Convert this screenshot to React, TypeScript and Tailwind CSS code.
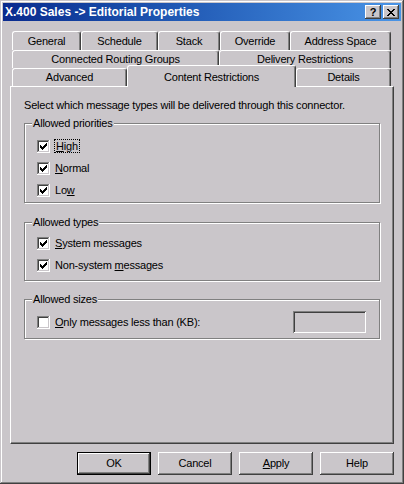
import React from 'react';

const FONT = { fontFamily: '"Liberation Sans", Arial, sans-serif' };

function CheckBox({ checked }: { checked: boolean }) {
  return (
    <svg width="13" height="13" viewBox="0 0 13 13" shapeRendering="crispEdges" className="shrink-0">
      <rect x="0" y="0" width="13" height="13" fill="#fff" />
      <rect x="0" y="0" width="12" height="1" fill="#808080" />
      <rect x="0" y="0" width="1" height="12" fill="#808080" />
      <rect x="0" y="12" width="13" height="1" fill="#fff" />
      <rect x="12" y="0" width="1" height="13" fill="#fff" />
      <rect x="1" y="1" width="10" height="1" fill="#404040" />
      <rect x="1" y="1" width="1" height="10" fill="#404040" />
      <rect x="1" y="11" width="11" height="1" fill="#cac6ca" />
      <rect x="11" y="1" width="1" height="11" fill="#cac6ca" />
      {checked && (
        <g fill="#000">
          <rect x="3" y="5" width="1" height="3" />
          <rect x="4" y="6" width="1" height="3" />
          <rect x="5" y="7" width="1" height="3" />
          <rect x="6" y="6" width="1" height="3" />
          <rect x="7" y="5" width="1" height="3" />
          <rect x="8" y="4" width="1" height="3" />
          <rect x="9" y="3" width="1" height="3" />
        </g>
      )}
    </svg>
  );
}

function CheckRow({ checked, children }: { checked: boolean; children: React.ReactNode }) {
  return (
    <div className="h-[22px] flex items-center gap-[5px]">
      <CheckBox checked={checked} />
      <span className="leading-[13px]">{children}</span>
    </div>
  );
}

function Tab({ label, w }: { label: string; w: string }) {
  return (
    <div
      className={`${w} h-full flex items-center justify-center border-l border-t border-white border-r border-r-[#404040] rounded-t-[3px] shadow-[inset_-1px_0_0_#808080]`}
    >
      {label}
    </div>
  );
}

function Group({ title, className, children }: { title: string; className: string; children: React.ReactNode }) {
  return (
    <div className={`relative ml-[13px] mr-[13px] border border-[#808080] shadow-[inset_1px_1px_0_#fff,1px_1px_0_#fff] ${className}`}>
      <span className="absolute left-[7px] -top-[7px] px-[1px] leading-[13px] bg-[#cac6ca]">{title}</span>
      {children}
    </div>
  );
}

function Button({ children, isDefault }: { children: React.ReactNode; isDefault?: boolean }) {
  return (
    <div
      className={`w-[74px] h-[23px] flex items-center justify-center shadow-[inset_-1px_-1px_0_#404040,inset_1px_1px_0_#fff,inset_-2px_-2px_0_#808080] ${
        isDefault ? 'border border-black' : ''
      }`}
    >
      {children}
    </div>
  );
}

export default function App() {
  const row1 = [
    { label: 'General', w: 'w-[69px]' },
    { label: 'Schedule', w: 'w-[77px]' },
    { label: 'Stack', w: 'w-[62px]' },
    { label: 'Override', w: 'w-[70px]' },
    { label: 'Address Space', w: 'w-[101px]' },
  ];
  const row2 = [
    { label: 'Connected Routing Groups', w: 'w-[207px]' },
    { label: 'Delivery Restrictions', w: 'w-[172px]' },
  ];

  return (
    <div
      style={FONT}
      className="w-[404px] h-[484px] bg-[#cac6ca] p-[3px] flex flex-col text-[11px] tracking-[-0.2px] text-black shadow-[inset_-1px_-1px_0_#404040,inset_1px_1px_0_#cac6ca,inset_-2px_-2px_0_#808080,inset_2px_2px_0_#fff]"
    >
      {/* Title bar */}
      <div className="h-[18px] shrink-0 flex items-center pl-[2px] pr-[2px] bg-gradient-to-r from-[#0a2a8e] to-[#4a94e6]">
        <span className="flex-1 text-white font-bold text-[12px] tracking-normal leading-none">
          X.400 Sales -&gt; Editorial Properties
        </span>
        <div className="flex gap-[2px]">
          <div className="w-[16px] h-[14px] bg-[#cac6ca] flex items-center justify-center font-bold text-[11px] tracking-normal leading-none shadow-[inset_-1px_-1px_0_#404040,inset_1px_1px_0_#fff,inset_-2px_-2px_0_#808080]">
            ?
          </div>
          <div className="w-[16px] h-[14px] bg-[#cac6ca] flex items-center justify-center shadow-[inset_-1px_-1px_0_#404040,inset_1px_1px_0_#fff,inset_-2px_-2px_0_#808080]">
            <svg width="8" height="7" viewBox="0 0 8 7" shapeRendering="crispEdges">
              <g fill="#000">
                <rect x="0" y="0" width="2" height="1" />
                <rect x="6" y="0" width="2" height="1" />
                <rect x="1" y="1" width="2" height="1" />
                <rect x="5" y="1" width="2" height="1" />
                <rect x="2" y="2" width="4" height="1" />
                <rect x="3" y="3" width="2" height="1" />
                <rect x="2" y="4" width="4" height="1" />
                <rect x="1" y="5" width="2" height="1" />
                <rect x="5" y="5" width="2" height="1" />
                <rect x="0" y="6" width="2" height="1" />
                <rect x="6" y="6" width="2" height="1" />
              </g>
            </svg>
          </div>
        </div>
      </div>

      <div className="flex-1 flex flex-col px-[7px] pt-[10px]">
        {/* Tabs */}
        <div className="flex h-[19px] px-[2px]">
          {row1.map((t) => (
            <Tab key={t.label} label={t.label} w={t.w} />
          ))}
        </div>
        <div className="flex h-[18px] px-[2px]">
          {row2.map((t) => (
            <Tab key={t.label} label={t.label} w={t.w} />
          ))}
        </div>
        <div className="flex h-[18px] px-[2px]">
          <Tab label="Advanced" w="w-[115px]" />
          <div className="relative z-10 w-[169px] h-[22px] -mt-[3px] flex items-start justify-center pt-[3px] bg-[#cac6ca] border-l border-t border-white border-r border-r-[#404040] rounded-t-[3px] shadow-[inset_-1px_0_0_#808080]">
            Content Restrictions
          </div>
          <Tab label="Details" w="w-[95px]" />
        </div>

        {/* Panel */}
        <div className="h-[358px] shrink-0 flex flex-col border-t border-l border-white border-r border-b border-r-[#404040] border-b-[#404040] shadow-[inset_-1px_-1px_0_#808080] pt-[12px]">
          <div className="pl-[13px] leading-[13px]">
            Select which message types will be delivered through this connector.
          </div>

          <Group title="Allowed priorities" className="mt-[11px] pl-[12px] pt-[11px] pb-[1px]">
            <CheckRow checked>
              <span className="outline outline-1 outline-dotted outline-black px-[1px]">
                <u>H</u>igh
              </span>
            </CheckRow>
            <CheckRow checked>
              <u>N</u>ormal
            </CheckRow>
            <CheckRow checked>
              Lo<u>w</u>
            </CheckRow>
          </Group>

          <Group title="Allowed types" className="mt-[19px] pl-[12px] pt-[9px] pb-[4px]">
            <CheckRow checked>
              <u>S</u>ystem messages
            </CheckRow>
            <CheckRow checked>
              Non-system <u>m</u>essages
            </CheckRow>
          </Group>

          <Group title="Allowed sizes" className="mt-[18px] pl-[12px] pr-[13px] pt-[11px] pb-[5px]">
            <div className="flex items-center justify-between">
              <div className="flex items-center gap-[5px]">
                <CheckBox checked={false} />
                <span className="leading-[13px]">
                  <u>O</u>nly messages less than (KB):
                </span>
              </div>
              <div className="w-[73px] h-[22px] shadow-[inset_1px_1px_0_#808080,inset_-1px_-1px_0_#fff,inset_2px_2px_0_#404040,inset_-2px_-2px_0_#cac6ca]" />
            </div>
          </Group>
        </div>

        {/* Buttons */}
        <div className="mt-[8px] flex justify-end gap-[7px]">
          <Button isDefault>OK</Button>
          <Button>Cancel</Button>
          <Button>
            <span>
              <u>A</u>pply
            </span>
          </Button>
          <Button>Help</Button>
        </div>
      </div>
    </div>
  );
}
